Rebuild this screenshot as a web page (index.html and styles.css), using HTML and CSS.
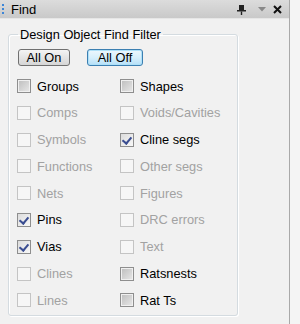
FILE: index.html
```html
<!DOCTYPE html>
<html lang="en">
<head>
    <meta charset="UTF-8">
    <title>Find</title>
    <link rel="stylesheet" href="styles.css">
</head>
<body>
    <div class="panel">
        <div class="titlebar">
            <span class="grip"></span>
            <span class="title">Find</span>
            <div class="tools">
                <svg class="pin" width="9" height="10" viewBox="0 0 9 10">
                    <rect x="2" y="0" width="5" height="5" fill="#222"/>
                    <rect x="0" y="5" width="9" height="1.5" fill="#222"/>
                    <rect x="3.8" y="6.5" width="1.4" height="3.5" fill="#222"/>
                </svg>
                <svg class="menu" width="8" height="5" viewBox="0 0 8 5">
                    <path d="M0 0 L8 0 L4 4.5 Z" fill="#888"/>
                </svg>
                <svg class="close" width="9" height="9" viewBox="0 0 9 9">
                    <path d="M1 1 L8 8 M8 1 L1 8" stroke="#111" stroke-width="2"/>
                </svg>
            </div>
        </div>

        <fieldset class="filter">
            <legend>Design Object Find Filter</legend>
            <div class="buttons">
                <button class="btn">All On</button>
                <button class="btn default">All Off</button>
            </div>
            <div class="checks">
                <div class="item"><span class="box mixed"></span>Groups</div>
                <div class="item"><span class="box mixed"></span>Shapes</div>
                <div class="item off"><span class="box"></span>Comps</div>
                <div class="item off"><span class="box"></span>Voids/Cavities</div>
                <div class="item off"><span class="box"></span>Symbols</div>
                <div class="item"><span class="box checked"></span>Cline segs</div>
                <div class="item off"><span class="box"></span>Functions</div>
                <div class="item off"><span class="box"></span>Other segs</div>
                <div class="item off"><span class="box"></span>Nets</div>
                <div class="item off"><span class="box"></span>Figures</div>
                <div class="item"><span class="box checked"></span>Pins</div>
                <div class="item off"><span class="box"></span>DRC errors</div>
                <div class="item"><span class="box checked"></span>Vias</div>
                <div class="item off"><span class="box"></span>Text</div>
                <div class="item off"><span class="box"></span>Clines</div>
                <div class="item"><span class="box mixed"></span>Ratsnests</div>
                <div class="item off"><span class="box"></span>Lines</div>
                <div class="item"><span class="box mixed"></span>Rat Ts</div>
            </div>
        </fieldset>
    </div>
</body>
</html>
```

FILE: styles.css
```css
body {
    margin: 0;
    background-color: #f4f4f4;
    font-family: "Liberation Sans", Arial, sans-serif;
    font-size: 12.8px;
    color: #000;
}

.panel {
    width: 289px;
    height: 324px;
    background-color: #f1f1f1;
    border-right: 1px solid #a9a9a9;
}

.titlebar {
    height: 18px;
    display: flex;
    align-items: center;
    background: linear-gradient(#dcdcdc, #c9c9c9);
    border-bottom: 1px solid #e6e6e6;
}

.grip {
    width: 2px;
    height: 10px;
    margin: 0 0 0 2px;
    background: repeating-linear-gradient(#3d86d8 0 2px, transparent 2px 4px);
}

.title {
    margin-left: 7px;
    font-size: 13px;
}

.tools {
    margin-left: auto;
    display: flex;
    align-items: center;
}

.pin {
    margin-right: 12px;
    margin-top: 2px;
}

.menu {
    margin-right: 7px;
}

.close {
    margin-right: 7px;
}

.filter {
    box-sizing: border-box;
    width: 230px;
    height: 289px;
    margin: 8px 0 0 8px;
    padding: 0 8px;
    border: 1px solid #d4dbe0;
    border-radius: 3px;
    box-shadow: inset 1px 1px 0 #fff, 1px 1px 0 #fff;
}

.filter legend {
    padding: 0 2px;
    margin-left: 1px;
}

.buttons {
    display: flex;
    gap: 17px;
    margin-top: 7px;
    padding-left: 1px;
}

.btn {
    height: 17px;
    padding: 0;
    font-family: inherit;
    font-size: 12.8px;
    color: #000;
    border: 1px solid #707070;
    border-radius: 3px;
    background: linear-gradient(#f4f4f4, #e4e4e4 50%, #d6d6d6);
    line-height: 14px;
    width: 52px;
}

.btn.default {
    width: 56px;
    border-color: #3c7fb1;
    background: linear-gradient(#edf7fd, #d7effc 50%, #b5e0f8);
    box-shadow: inset 0 0 0 1px #aee0f8;
}

.checks {
    display: grid;
    grid-template-columns: 103px 1fr;
    grid-auto-rows: 26.8px;
    margin-top: 12px;
}

.item {
    display: flex;
    align-items: center;
    height: 16px;
}

.item.off {
    color: #a2a2a2;
}

.box {
    box-sizing: border-box;
    width: 14px;
    height: 14px;
    margin-right: 6px;
    border: 1px solid #c4c4c4;
    background: #f6f6f6;
    position: relative;
}

.box.mixed {
    border-color: #8e8e8e;
    background: linear-gradient(135deg, #bdbdbd, #e8e8e8);
    box-shadow: inset 0 0 0 1px #f0f0f0;
}

.box.checked {
    border-color: #8e8e8e;
    background: linear-gradient(135deg, #dcdcdc, #f8f8f8);
}

.box.checked::after {
    content: "";
    position: absolute;
    left: 3px;
    top: 1px;
    width: 4px;
    height: 7px;
    border-right: 2px solid #3a4d91;
    border-bottom: 2px solid #3a4d91;
    transform: rotate(40deg);
}
```
